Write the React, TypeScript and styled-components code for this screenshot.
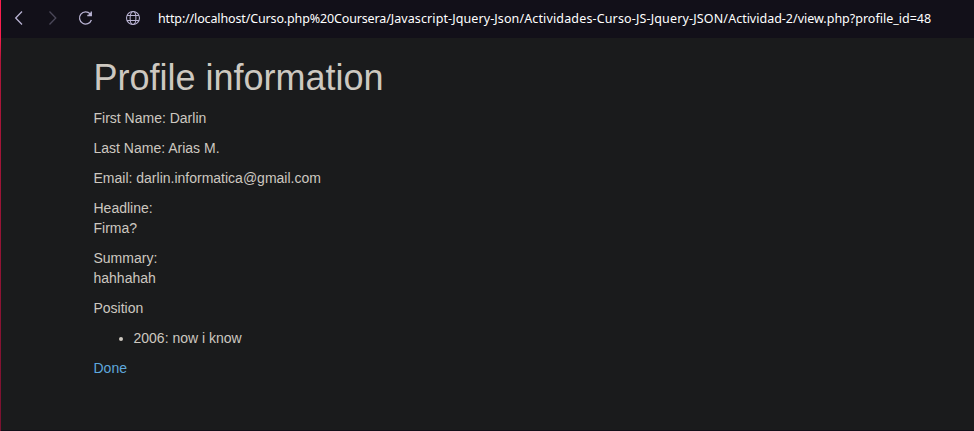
import React from "react";
import styled, { createGlobalStyle } from "styled-components";

const GlobalStyle = createGlobalStyle`
  * { box-sizing: border-box; }
  html, body { margin: 0; background: #1a1b1c; overflow: hidden; }
`;

const Window = styled.div`
  display: flex;
  height: 431px;
  background: #1a1b1c;
`;

const AccentEdge = styled.div`
  flex: none;
  width: 1px;
  background: linear-gradient(#fa1e4e 0, #fa1e4e 38px, #b0163a 60px, #7a1230 100%);
`;

const Pane = styled.div`
  flex: 1;
  display: flex;
  flex-direction: column;
  min-width: 0;
  border-bottom: 1px solid #121019;
`;

const AddressBar = styled.header`
  flex: none;
  display: flex;
  align-items: center;
  height: 38px;
  padding: 0 0 2px 9px;
  background: #121019;
`;

const BarIcon = styled.svg<{ $gap: number; $color?: string; $weight?: number }>`
  flex: none;
  width: 18px;
  height: 18px;
  margin-right: ${({ $gap }) => $gap}px;
  fill: none;
  stroke: ${({ $color }) => $color ?? "#b9b3d3"};
  stroke-width: ${({ $weight }) => $weight ?? 1.3};
`;

const Url = styled.span`
  padding-top: 2px;
  color: #fff;
  font: 12.5px/18px "Noto Sans", sans-serif;
  white-space: nowrap;
`;

const UrlPart = styled.span<{ $tracking: number }>`
  letter-spacing: ${({ $tracking }) => $tracking}px;
`;

const urlParts = [
  { text: "http://localhost/Curso.php%20Coursera/", tracking: -0.14 },
  { text: "Javascript-Jquery-Json/", tracking: 0.1 },
  { text: "Actividades-Curso-JS-Jquery-JSON/", tracking: 0.15 },
  { text: "Actividad-2/view.php?profile_id=48", tracking: 0 },
];

const Content = styled.main`
  flex: 1;
  padding: 20px 0 0 92.5px;
  color: #cdc8c0;
  font: 14px/20px "Liberation Sans", Arial, sans-serif;
`;

const Title = styled.h1`
  margin: 0 0 10px;
  font-size: 36px;
  font-weight: 400;
  line-height: 39.6px;
`;

const Field = styled.p`
  margin: 0 0 10px;
`;

const Positions = styled.ul`
  margin: 0 0 10px;
  padding-left: 40px;
`;

const DoneLink = styled.a`
  color: #5fa8dc;
  text-decoration: none;
`;

export default function App() {
  return (
    <Window>
      <GlobalStyle />
      <AccentEdge />
      <Pane>
        <AddressBar>
          <BarIcon $gap={16} viewBox="0 0 18 18">
            <path d="M12 2.5 5.7 9l6.3 6.5" />
          </BarIcon>
          <BarIcon $gap={15} $color="#4b4859" viewBox="0 0 18 18">
            <path d="m5.5 2.5 6.3 6.5-6.3 6.5" />
          </BarIcon>
          <BarIcon $gap={29} viewBox="0 0 18 18">
            <path d="M13.2 4.9A6.1 6.1 0 1 0 14.4 11M14.3 2.5v4h-4" />
            <path d="m14.3 2.9-3.6 3.6h3.6z" fill="#b9b3d3" stroke="none" />
          </BarIcon>
          <BarIcon $gap={16} $weight={1.05} viewBox="0 0 18 18">
            <circle cx="9" cy="9" r="6.5" />
            <ellipse cx="9" cy="9" rx="2.9" ry="6.5" />
            <path d="M3 6.5h12M3 11.5h12" />
          </BarIcon>
          <Url>
            {urlParts.map(({ text, tracking }) => (
              <UrlPart key={text} $tracking={tracking}>{text}</UrlPart>
            ))}
          </Url>
        </AddressBar>
        <Content>
          <Title>Profile information</Title>
          <Field>First Name: Darlin</Field>
          <Field>Last Name: Arias M.</Field>
          <Field>Email: darlin.informatica@gmail.com</Field>
          <Field>
            Headline:
            <br />
            Firma?
          </Field>
          <Field>
            Summary:
            <br />
            hahhahah
          </Field>
          <Field>Position</Field>
          <Positions>
            <li>2006: now i know</li>
          </Positions>
          <DoneLink href="#">Done</DoneLink>
        </Content>
      </Pane>
    </Window>
  );
}
